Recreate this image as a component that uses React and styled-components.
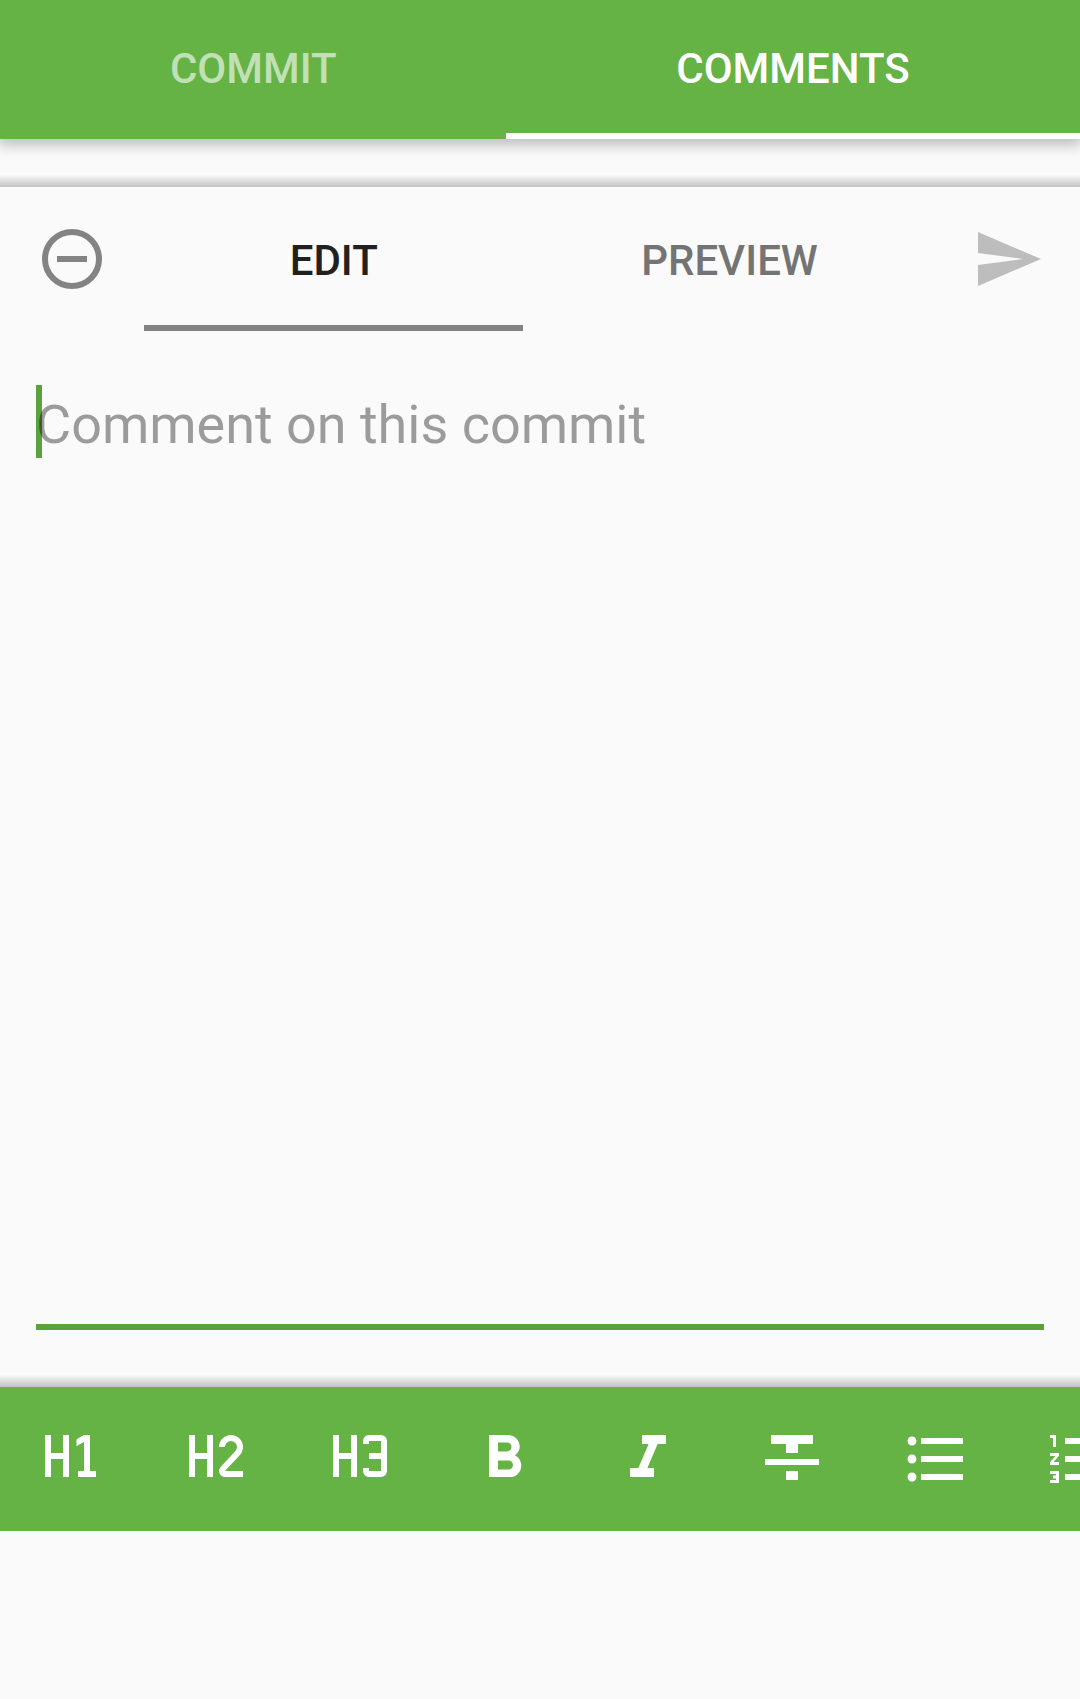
import React from 'react';
import styled, { createGlobalStyle } from 'styled-components';
import {
  MdFormatBold,
  MdFormatItalic,
  MdFormatStrikethrough,
  MdFormatListBulleted,
  MdFormatListNumbered,
  MdSend,
} from 'react-icons/md';

const GlobalStyle = createGlobalStyle`
  *, *::before, *::after { box-sizing: border-box; }
  body {
    margin: 0;
    background: #fafafa;
    font-family: Roboto, "Liberation Sans", sans-serif;
    overflow: hidden;
  }
`;

const Screen = styled.div`
  display: flex;
  flex-direction: column;
  height: 1699px;
  background: #fafafa;
  overflow: hidden;
`;

const TabButton = styled.button`
  flex: ${({ $width }) => ($width ? `0 0 ${$width}px` : '1')};
  display: flex;
  align-items: center;
  justify-content: center;
  margin: 0;
  border: 0;
  padding: ${({ $top }) => $top}px 0 0 ${({ $width }) => ($width ? 0.5 : 0)}px;
  border-bottom: 6px solid ${({ $line }) => $line || 'transparent'};
  background: none;
  color: ${({ $color }) => $color};
  font: 500 42px/50px Roboto, "Liberation Sans", sans-serif;
`;

const AppTabs = styled.nav`
  display: flex;
  flex: 0 0 139px;
  background: #65b245;
  box-shadow: 0 4px 13px 2px rgba(0, 0, 0, 0.25);
`;

const EdgeShadow = styled.div`
  flex: 0 0 12px;
  margin-top: ${({ $gap }) => $gap || 0}px;
  background: linear-gradient(to bottom, #f8f8f8, #c2c2c2);
`;

const EditorHeader = styled.header`
  display: flex;
  flex: 0 0 144px;
  background: #fafafa;
`;

const IconButton = styled.button`
  flex: 0 0 144px;
  display: flex;
  align-items: center;
  justify-content: center;
  margin: 0;
  border: 0;
  padding: 0;
  background: none;
  color: ${({ $color }) => $color || '#fff'};
  svg { display: block; width: 72px; height: 72px; }
`;

const Editor = styled.main`
  display: flex;
  flex: 0 0 1044px;
  padding: 54px 36px 45px;
`;

const Field = styled.div`
  flex: 1;
  border-bottom: 6px solid #5ba13e;
`;

const Hint = styled.div`
  height: 73px;
  border-left: 6px solid #5ba13e;
  font-size: 54px;
  line-height: 80px;
  letter-spacing: -0.02px;
  white-space: nowrap;
`;

const HintText = styled.span`
  display: inline-block;
  margin-left: -6px;
  color: rgba(0, 0, 0, 0.38);
`;

const Toolbar = styled.div`
  display: flex;
  flex: 0 0 144px;
  background: #65b245;
  overflow: hidden;
`;

const headingStrokes = {
  1: 'M12 7.45L17 4.57M17 4V17M14 17H20',
  2: 'M14 8A3 3 0 0 1 20 8C20 8.83 19.65 9.57 19.12 10.12L14.27 15.32C14.1 15.5 14 15.72 14 16A1 1 0 0 0 15 17H21',
  3: 'M14 7V6A1 1 0 0 1 15 5H19A1 1 0 0 1 20 6V16A1 1 0 0 1 19 17H15A1 1 0 0 1 14 16V15M15 11H20',
};

function HeadingIcon({ level }) {
  const clip = `heading-${level}`;
  return (
    <svg viewBox="0 0 24 24" fill="none" stroke="currentColor" strokeWidth="2">
      <clipPath id={clip}>
        <rect x={level === 1 ? 13.5 : 13} y="4" width="8" height="14" />
      </clipPath>
      <path d="M4 4V18M10 4V18M4 11H10" />
      <path d={headingStrokes[level]} clipPath={`url(#${clip})`} />
    </svg>
  );
}

function CollapseIcon() {
  return (
    <svg viewBox="0 0 24 24" fill="none" stroke="currentColor" strokeWidth="2">
      <circle cx="12" cy="12" r="9" />
      <path d="M7 12H17" />
    </svg>
  );
}

const tools = [
  { name: 'Heading 1', icon: <HeadingIcon level={1} /> },
  { name: 'Heading 2', icon: <HeadingIcon level={2} /> },
  { name: 'Heading 3', icon: <HeadingIcon level={3} /> },
  { name: 'Bold', icon: <MdFormatBold /> },
  { name: 'Italic', icon: <MdFormatItalic /> },
  { name: 'Strikethrough', icon: <MdFormatStrikethrough /> },
  { name: 'Bulleted list', icon: <MdFormatListBulleted /> },
  { name: 'Numbered list', icon: <MdFormatListNumbered /> },
];

export default function App() {
  return (
    <Screen>
      <GlobalStyle />
      <AppTabs>
        <TabButton $top={4} $width={506} $color="#c2e0b5">COMMIT</TabButton>
        <TabButton $top={4} $color="#fff" $line="#fff">COMMENTS</TabButton>
      </AppTabs>
      <EdgeShadow $gap={36} />
      <EditorHeader>
        <IconButton $color="#838383" aria-label="Collapse"><CollapseIcon /></IconButton>
        <TabButton $top={10} $width={379} $color="#212121" $line="#838383">EDIT</TabButton>
        <TabButton $top={10} $color="#747474">PREVIEW</TabButton>
        <IconButton $color="#bdbdbd" aria-label="Send"><MdSend /></IconButton>
      </EditorHeader>
      <Editor>
        <Field>
          <Hint><HintText>Comment on this commit</HintText></Hint>
        </Field>
      </Editor>
      <EdgeShadow />
      <Toolbar>
        {tools.map(({ name, icon }) => (
          <IconButton key={name} aria-label={name}>{icon}</IconButton>
        ))}
      </Toolbar>
    </Screen>
  );
}
